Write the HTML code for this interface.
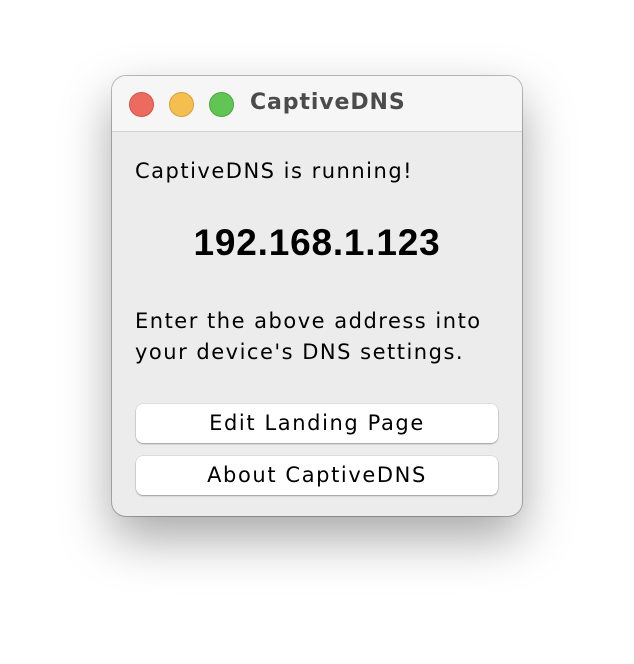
<!DOCTYPE html>
<html><head><style>
body{margin:0;width:634px;height:664px;background:#fff;position:relative;font-family:"Liberation Sans",sans-serif;overflow:hidden}
.win{position:absolute;left:112px;top:76px;width:410px;height:440px;border-radius:14px;background:#ececec;box-shadow:0 22px 50px rgba(0,0,0,.35),0 0 0 1px rgba(0,0,0,.25);overflow:hidden}
.tb{height:55px;background:#f6f6f6;border-bottom:1px solid #d2d2d2;position:relative}
.dot{position:absolute;top:16px;width:23px;height:23px;border-radius:50%}
.tt{position:absolute;left:138px;top:14px;font-family:"DejaVu Sans",sans-serif;font-size:22px;letter-spacing:0.9px;font-weight:bold;color:#4b4b4b}
.t{position:absolute;left:23px;font-family:"DejaVu Sans",sans-serif;font-size:21px;letter-spacing:1.5px;color:#000;line-height:31px}
.ip{position:absolute;left:0;width:410px;text-align:center;top:146px;font-size:37px;font-weight:bold;letter-spacing:0.8px}
.btn{position:absolute;left:24px;width:362px;height:39px;background:#fff;border-radius:7px;box-shadow:0 1px 1.5px rgba(0,0,0,.3),0 0 0 .5px rgba(0,0,0,.12);text-align:center;line-height:39px;font-family:"DejaVu Sans",sans-serif;font-size:21px;letter-spacing:1.6px}
</style></head><body>
<div class="win">
<div class="tb">
<div class="dot" style="left:17px;background:#ed6a5e;border:.5px solid #d65348"></div>
<div class="dot" style="left:57px;background:#f5bf4f;border:.5px solid #d6a13b"></div>
<div class="dot" style="left:97px;background:#61c554;border:.5px solid #4ca63f"></div>
<div class="tt">CaptiveDNS</div>
</div>
<div class="t" style="top:80px">CaptiveDNS is running!</div>
<div class="ip">192.168.1.123</div>
<div class="t" style="top:230px">Enter the above address into<br>your device's DNS settings.</div>
<div class="btn" style="top:328px">Edit Landing Page</div>
<div class="btn" style="top:380px">About CaptiveDNS</div>
</div>
</body></html>
